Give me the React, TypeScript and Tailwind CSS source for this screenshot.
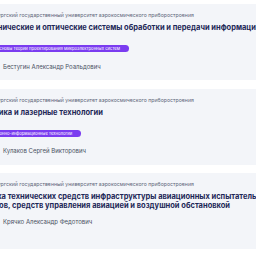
const programs = [
  {
    title: "Радиотехнические и оптические системы обработки и передачи информации",
    tag: "Элементы и основы теории проектирования микроэлектронных систем",
    head: "Бестугин Александр Роальдович",
  },
  {
    title: "Электроника и лазерные технологии",
    tag: "Коммуникационно-информационные технологии",
    head: "Кулаков Сергей Викторович",
  },
  {
    title:
      "Разработка технических средств инфраструктуры авиационных испытательных комплексов, средств управления авиацией и воздушной обстановкой",
    tag: null,
    head: "Крячко Александр Федотович",
  },
];

const uni = "Санкт-Петербургский государственный университет аэрокосмического приборостроения";

function ProgramCard({ title, tag, head }: { title: string; tag: string | null; head: string }) {
  return (
    <div className="h-[76px] shrink-0 rounded-lg bg-[#f3f5f9] pl-[12px] pt-[8px]">
      <p className="whitespace-nowrap text-[5.2px] leading-[7px] text-[#5b6478]">{uni}</p>
      <h3 className="mt-[4px] w-[318px] text-[7.5px] font-bold leading-[9px] text-[#1d2757]">{title}</h3>
      {tag && (
        <span className="mt-[4.5px] inline-block whitespace-nowrap rounded-full bg-[#7a3cf0] pl-[9px] pr-[9px] text-[4.2px] leading-[7px] text-white">
          {tag}
        </span>
      )}
      <p className={`${tag ? "mt-[6.5px]" : "mt-[8px]"} pl-[41px] text-[6px] leading-[8px] text-[#4a5163]`}>{head}</p>
    </div>
  );
}

export default function App() {
  return (
    <div className="h-[256px] w-[256px] overflow-hidden bg-white" style={{ fontFamily: "Inter, 'Noto Sans', sans-serif" }}>
      <div className="-ml-[50px] flex w-[420px] flex-col gap-[8.5px] pt-[4px]">
        {programs.map((p) => (
          <ProgramCard key={p.head} {...p} />
        ))}
      </div>
    </div>
  );
}
